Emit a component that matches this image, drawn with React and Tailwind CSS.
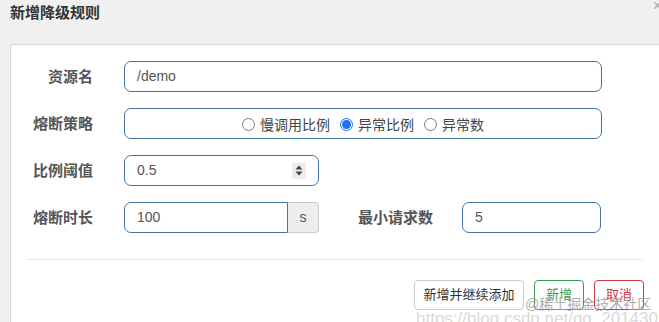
import React from "react";

const font = { fontFamily: '"Liberation Sans", "Noto Sans CJK SC", sans-serif' };

function Radio({ checked, label }) {
  return (
    <span className="flex items-center gap-[5px]">
      {checked ? (
        <span className="w-[13px] h-[13px] rounded-full border border-[#1a73e8] flex items-center justify-center bg-white">
          <span className="w-[9px] h-[9px] rounded-full bg-[#1a73e8]" />
        </span>
      ) : (
        <span className="w-[13px] h-[13px] rounded-full border border-[#767676] bg-white" />
      )}
      <span className="text-[14px] text-[#444] pt-[2px]">{label}</span>
    </span>
  );
}

export default function App() {
  return (
    <div
      className="w-[659px] h-[322px] bg-[#f0f0f0] overflow-hidden relative"
      style={font}
    >
      <div className="h-[44px] pl-[10px] pt-[1px]">
        <span className="text-[15px] font-bold text-[#333]">新增降级规则</span>
      </div>
      <span className="absolute right-[-3px] top-[-6px] text-[16px] text-[#aaa]">×</span>

      <div className="ml-[10px] bg-white border-t border-l border-[#d8d8d8] rounded-tl-[4px] h-[300px] pt-[16px]">
        <div className="flex flex-col gap-[16px]">
          <div className="flex items-center">
            <div className="w-[82px] text-right text-[15px] font-bold text-[#555] pt-[2px]">资源名</div>
            <div className="ml-[31px] w-[478px] h-[31px] border border-[#4272a3] rounded-[7px] flex items-center pl-[12px] text-[14px] text-[#555]">
              /demo
            </div>
          </div>
          <div className="flex items-center">
            <div className="w-[82px] text-right text-[15px] font-bold text-[#555] pt-[2px]">熔断策略</div>
            <div className="ml-[31px] w-[478px] h-[31px] border border-[#4272a3] rounded-[7px] flex items-center justify-center gap-[10px] pt-[1px]">
              <Radio label="慢调用比例" />
              <Radio checked label="异常比例" />
              <Radio label="异常数" />
            </div>
          </div>
          <div className="flex items-center">
            <div className="w-[82px] text-right text-[15px] font-bold text-[#555] pt-[2px]">比例阈值</div>
            <div className="ml-[31px] w-[195px] h-[31px] border border-[#4272a3] rounded-[7px] flex items-center pl-[12px] pr-[12px] text-[14px] text-[#555]">
              <span className="flex-1">0.5</span>
              <span className="w-[14px] h-[16px] bg-[#ececec] flex items-center justify-center">
                <svg width="8" height="11" viewBox="0 0 8 11">
                  <path d="M4 0.5 L7.5 4.5 L0.5 4.5 Z" fill="#444" />
                  <path d="M4 10.5 L7.5 6.5 L0.5 6.5 Z" fill="#444" />
                </svg>
              </span>
            </div>
          </div>
          <div className="flex items-center">
            <div className="w-[82px] text-right text-[15px] font-bold text-[#555] pt-[2px]">熔断时长</div>
            <div className="ml-[31px] flex h-[31px]">
              <div className="w-[164px] border border-[#4272a3] rounded-l-[7px] flex items-center pl-[12px] text-[14px] text-[#555]">
                100
              </div>
              <div className="w-[31px] border border-l-0 border-[#ccc] bg-[#eee] rounded-r-[4px] flex items-center justify-center text-[14px] text-[#555]">
                s
              </div>
            </div>
            <div className="ml-[39px] text-[15px] font-bold text-[#555] pt-[2px]">最小请求数</div>
            <div className="ml-[29px] w-[139px] h-[31px] border border-[#4272a3] rounded-[7px] flex items-center pl-[12px] text-[14px] text-[#555]">
              5
            </div>
          </div>
        </div>

        <div className="ml-[16px] mr-[16px] mt-[26px] border-t border-[#e5e5e5]" />

        <div className="flex justify-end gap-[10px] mr-[15px] mt-[20px]">
          <button className="h-[30px] w-[110px] border border-[#ccc] rounded-[4px] bg-white text-[13px] text-[#333]">
            新增并继续添加
          </button>
          <button className="h-[30px] w-[50px] border border-[#3c9b4e] rounded-[4px] bg-white text-[13px] text-[#3c9b4e]">
            新增
          </button>
          <button className="h-[30px] w-[50px] border border-[#c9394a] rounded-[4px] bg-white text-[13px] text-[#c9394a]">
            取消
          </button>
        </div>
      </div>

      <span className="absolute left-[525px] top-[294px] text-[14px] text-[#9a9a9a] whitespace-nowrap opacity-80">
        @稀土掘金技术社区
      </span>
      <span className="absolute left-[416px] top-[306px] text-[17px] text-[#dadada] whitespace-nowrap">
        https://blog.csdn.net/qq_20143059
      </span>
    </div>
  );
}
